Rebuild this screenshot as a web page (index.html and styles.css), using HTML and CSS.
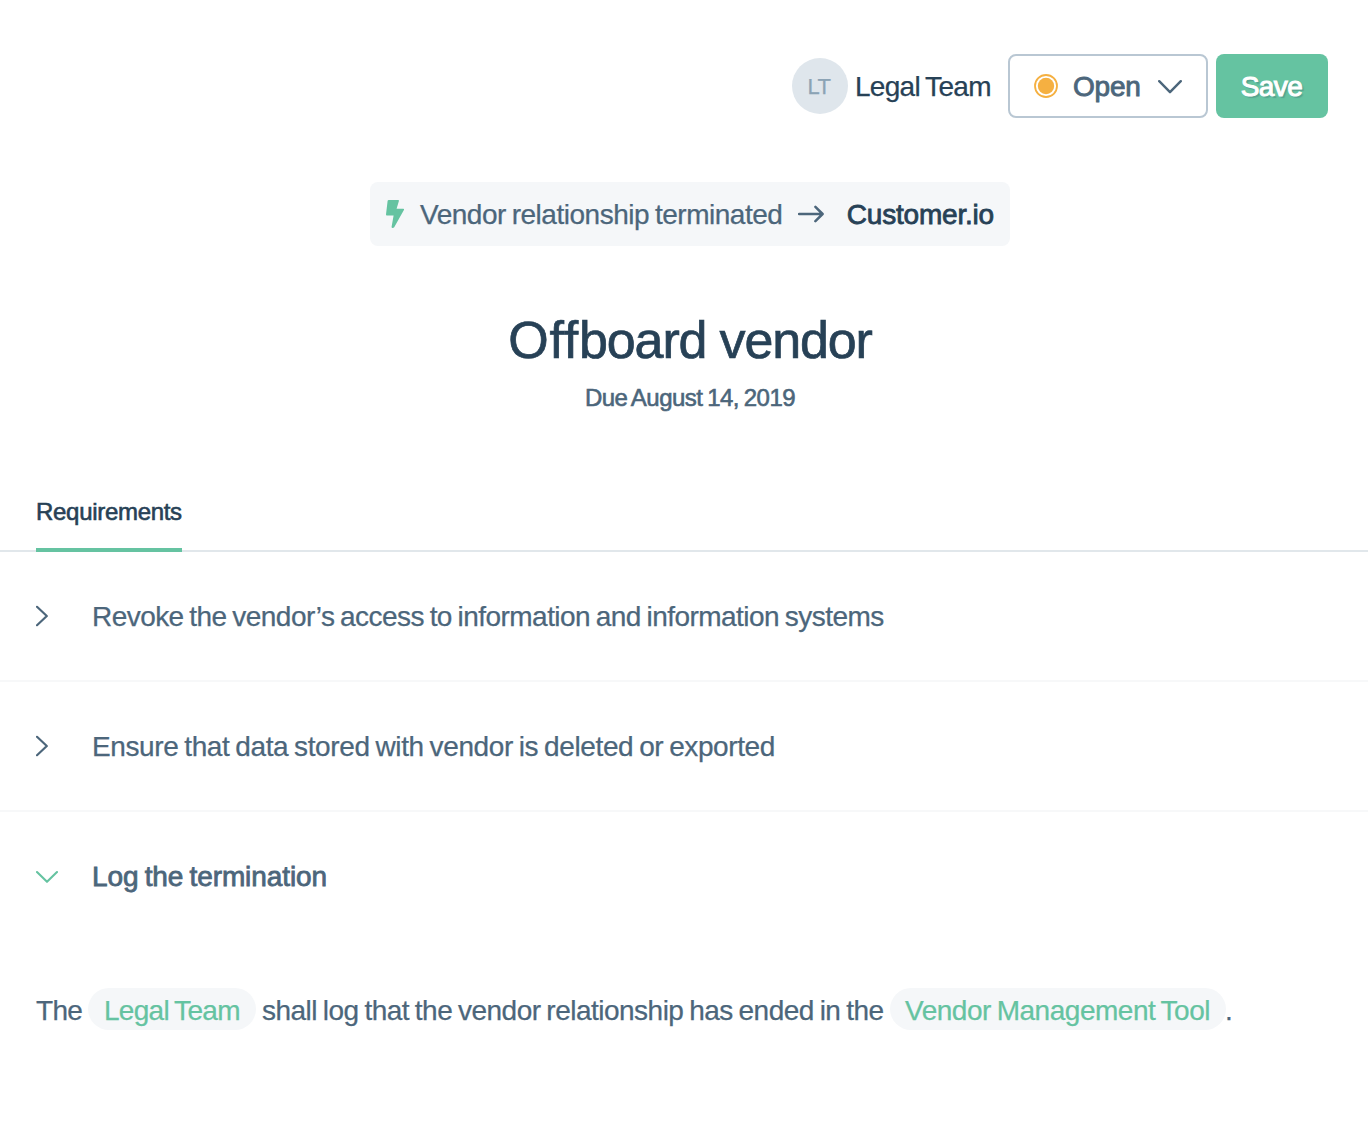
FILE: index.html
```html
<!DOCTYPE html>
<html lang="en">
<head>
<meta charset="utf-8">
<title>Offboard vendor</title>
<link rel="stylesheet" href="styles.css">
</head>
<body>
<header class="toolbar">
  <div class="assignee"><span class="avatar">LT</span><span class="assignee-name">Legal Team</span></div>
  <button class="status" type="button">
    <svg class="status-dot" width="24" height="24" viewBox="0 0 24 24"><circle cx="12" cy="12" r="11" fill="none" stroke="#f5b041" stroke-width="1.8"/><circle cx="12" cy="12" r="8.2" fill="#f5b041"/></svg>
    <span class="status-label">Open</span>
    <svg class="caret" width="24" height="14" viewBox="0 0 24 14" fill="none" stroke="#4c667b" stroke-width="2.4" stroke-linecap="round" stroke-linejoin="round"><path d="M1.2 1.2 12 12.2 22.8 1.2"/></svg>
  </button>
  <button class="save" type="button">Save</button>
</header>
<main>
  <div class="trigger">
    <svg class="bolt" width="18" height="28" viewBox="0 0 18 28"><path d="M2.8 0H12.2Q13.2 0 12.9 1L10.6 8.8H17.2Q18.4 8.8 17.9 9.9L8.2 27.2Q7.6 28 6.6 28 5.4 28 5.6 26.8L7.6 15.6H.8Q0 15.6 0 14.6L1.6 1Q1.7 0 2.8 0Z" fill="#65c3a1"/></svg>
    <span class="trigger-event">Vendor relationship terminated</span>
    <svg class="arrow" width="26" height="18" viewBox="0 0 26 18" fill="none" stroke="#4c667b" stroke-width="2.5" stroke-linecap="round" stroke-linejoin="round"><path d="M1 9H24.5M17.4 1.8 24.6 9 17.4 16.2"/></svg>
    <span class="trigger-vendor">Customer.io</span>
  </div>
  <h1 class="title"><span class="title-lead">Off</span>board vendor</h1>
  <p class="due">Due August 14, 2019</p>
  <nav class="tabs"><span class="tab">Requirements</span></nav>
  <section class="row">
    <span class="chevron"><svg width="12" height="22" viewBox="0 0 12 22" fill="none" stroke="#4c667b" stroke-width="2.2" stroke-linecap="round" stroke-linejoin="round"><path d="M1 1.8 10.8 11 1 20.2"/></svg></span>
    <span class="row-text row-revoke">Revoke the vendor’s access to information and information systems</span>
  </section>
  <section class="row">
    <span class="chevron"><svg width="12" height="22" viewBox="0 0 12 22" fill="none" stroke="#4c667b" stroke-width="2.2" stroke-linecap="round" stroke-linejoin="round"><path d="M1 1.8 10.8 11 1 20.2"/></svg></span>
    <span class="row-text row-data">Ensure that data stored with vendor is deleted or exported</span>
  </section>
  <section class="row row-open">
    <span class="chevron"><svg width="22" height="12" viewBox="0 0 22 12" fill="none" stroke="#65c3a1" stroke-width="2.1" stroke-linecap="round" stroke-linejoin="round"><path d="M1 1.1 11 10.8 21 1.1"/></svg></span>
    <span class="row-text row-log">Log the termination</span>
  </section>
  <p class="detail"><span class="word-the">The</span><span class="tag tag-team">Legal Team</span><span class="detail-text">shall log that the vendor relationship has ended in the</span><span class="tag tag-tool">Vendor Management Tool</span><span class="stop">.</span></p>
</main>
</body>
</html>
```
FILE: styles.css
```css
* { box-sizing: border-box; }
body {
  margin: 0;
  height: 1122px;
  overflow: hidden;
  background: #fff;
  color: #4c667b;
  font-family: "Liberation Sans", Arial, sans-serif;
  font-size: 28px;
  line-height: 32px;
  letter-spacing: -0.7px;
  word-spacing: -1.5px;
  white-space: nowrap;
  -webkit-text-stroke: 0.25px;
}
button { font: inherit; letter-spacing: inherit; color: inherit; margin: 0; }
svg { display: block; flex: none; }
.toolbar {
  display: flex;
  justify-content: flex-end;
  align-items: center;
  height: 118px;
  padding: 54px 40px 0 0;
}
.assignee { display: flex; align-items: center; width: 216px; gap: 7px; }
.avatar {
  display: flex;
  align-items: center;
  justify-content: center;
  width: 56px;
  height: 56px;
  padding: 1px 2px 0 0;
  border-radius: 50%;
  background: #dfe6ec;
  color: #8ba3b5;
  font-size: 22px;
  letter-spacing: -0.4px;
}
.assignee-name { margin-top: 2px; color: #274156; }
.status {
  display: flex;
  align-items: center;
  width: 200px;
  height: 64px;
  padding: 0 24px;
  border: 2px solid #b9c7d3;
  border-radius: 8px;
  background: #fff;
}
.status-label {
  width: 69px;
  margin: 2px 16px 0 15px;
  letter-spacing: -0.2px;
  text-align: left;
  -webkit-text-stroke: 0.9px;
}
.caret { margin-top: 2px; }
.save {
  width: 112px;
  height: 64px;
  margin-left: 8px;
  padding: 2px 1px 0 0;
  border: 0;
  border-radius: 8px;
  background: #65c3a1;
  color: #fff;
  letter-spacing: -0.6px;
  text-shadow: 2px 2px 1px rgba(39, 65, 86, 0.25);
  -webkit-text-stroke: 1px;
}
.trigger {
  display: flex;
  align-items: center;
  width: 640px;
  height: 64px;
  margin: 64px 0 0 370px;
  padding: 0 16px;
  border-radius: 8px;
  background: #f5f7f9;
}
.trigger-event { width: 364px; margin: 2px 0 0 16px; letter-spacing: -0.48px; }
.arrow { margin: 0 23px 0 14px; }
.trigger-vendor { margin-top: 2px; color: #274156; letter-spacing: -0.2px; -webkit-text-stroke: 0.8px; }
.title {
  margin: 62px 0 0 12px;
  color: #274156;
  font-size: 52px;
  font-weight: 400;
  line-height: 64px;
  letter-spacing: -1.15px;
  word-spacing: 0;
  text-align: center;
  -webkit-text-stroke: 0.7px;
}
.title-lead { letter-spacing: 0.8px; }
.due {
  margin: 10px 0 0 12px;
  font-size: 24px;
  line-height: 32px;
  letter-spacing: -0.5px;
  text-align: center;
  -webkit-text-stroke: 0.6px;
}
.tabs {
  display: flex;
  height: 138px;
  padding-left: 36px;
  align-items: flex-end;
  box-shadow: inset 0 -2px #e1e7eb;
}
.tab {
  width: 146px;
  height: 56px;
  border-bottom: 4px solid #65c3a1;
  color: #274156;
  font-size: 24px;
  letter-spacing: -0.3px;
  -webkit-text-stroke: 0.6px;
}
.row {
  display: flex;
  align-items: center;
  height: 130px;
  padding-left: 36px;
  border-bottom: 2px solid #f7f8f9;
}
.row-open { border-color: transparent; }
.row-open .chevron { margin-top: 2px; }
.chevron { width: 56px; }
.row-text { margin-top: 2px; }
.row-revoke { letter-spacing: -0.55px; }
.row-data { letter-spacing: -0.39px; }
.row-log { letter-spacing: -0.09px; -webkit-text-stroke: 0.8px; }
.detail { display: flex; height: 42px; margin: 46px 0 0; padding-left: 36px; line-height: 46px; }
.word-the { width: 52px; }
.tag { height: 42px; padding-left: 16px; border-radius: 21px; background: #f5f7f9; color: #65c3a1; }
.tag-team { width: 168px; }
.detail-text { width: 628px; margin-left: 6px; letter-spacing: -0.51px; }
.tag-tool { width: 336px; padding-left: 15px; letter-spacing: -0.48px; }
.stop { margin-left: -1px; }
```
